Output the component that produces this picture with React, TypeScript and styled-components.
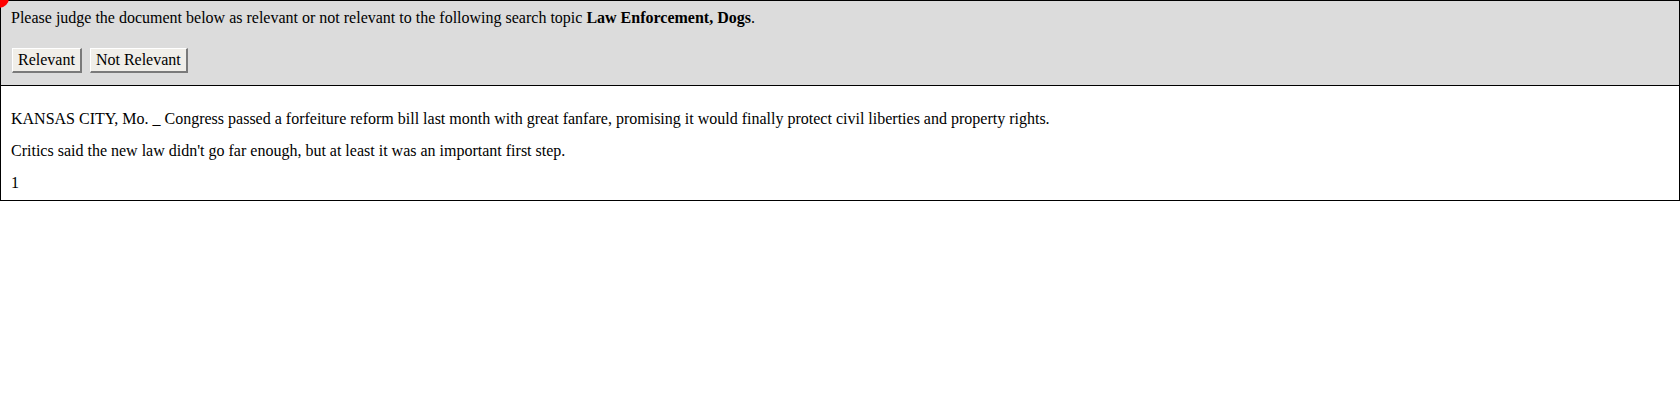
import React from "react";
import styled, { createGlobalStyle } from "styled-components";

const Global = createGlobalStyle`
  html, body { margin: 0; padding: 0; background: #fff; }
  body { font-family: "Liberation Serif", "Times New Roman", serif; font-size: 16px; color: #000; }
`;

const Page = styled.div`
  display: flex;
  flex-direction: column;
  width: 1680px;
  box-sizing: border-box;
`;

const Header = styled.div`
  background: #dcdcdc;
  border: 1px solid #000;
  padding: 7px 10px 12px 10px;
  display: flex;
  flex-direction: column;
  gap: 21px;
`;

const Prompt = styled.div`
  line-height: 19px;
`;

const Actions = styled.div`
  display: flex;
  gap: 8px;
  padding-left: 1px;
`;

const JudgeButton = styled.button`
  font-family: "Liberation Serif", "Times New Roman", serif;
  font-size: 16px;
  color: #000;
  background: #f0eee9;
  border-style: solid;
  border-width: 1px 2px 2px 1px;
  border-color: #ffffff #7a7a7a #7a7a7a #ffffff;
  height: 25px;
  padding: 0 5px;
  line-height: 20px;
  cursor: pointer;
`;

const Doc = styled.div`
  border: 1px solid #000;
  margin-top: -1px;
  padding: 9px 9px 9px 10px;
`;

const Para = styled.p`
  margin: 16px 0 0 0;
  line-height: 16px;
`;

const PageNum = styled.div`
  margin-top: 16px;
  line-height: 16px;
`;

const Cursor = styled.div`
  position: fixed;
  left: -11px;
  top: -12px;
  width: 20px;
  height: 20px;
  border-radius: 50%;
  background: #ff0000;
  pointer-events: none;
  z-index: 10;
`;

export default function App() {
  return (
    <>
      <Global />
      <Page>
        <Header>
          <Prompt>
            Please judge the document below as relevant or not relevant to the following search topic{" "}
            <b>Law Enforcement, Dogs</b>.
          </Prompt>
          <Actions>
            <JudgeButton>Relevant</JudgeButton>
            <JudgeButton>Not Relevant</JudgeButton>
          </Actions>
        </Header>
        <Doc>
          <Para>
            KANSAS CITY, Mo. _ Congress passed a forfeiture reform bill last month with great fanfare, promising it would finally protect civil liberties and property rights.
          </Para>
          <Para>
            Critics said the new law didn't go far enough, but at least it was an important first step.
          </Para>
          <PageNum>1</PageNum>
        </Doc>
      </Page>
      <Cursor />
    </>
  );
}
